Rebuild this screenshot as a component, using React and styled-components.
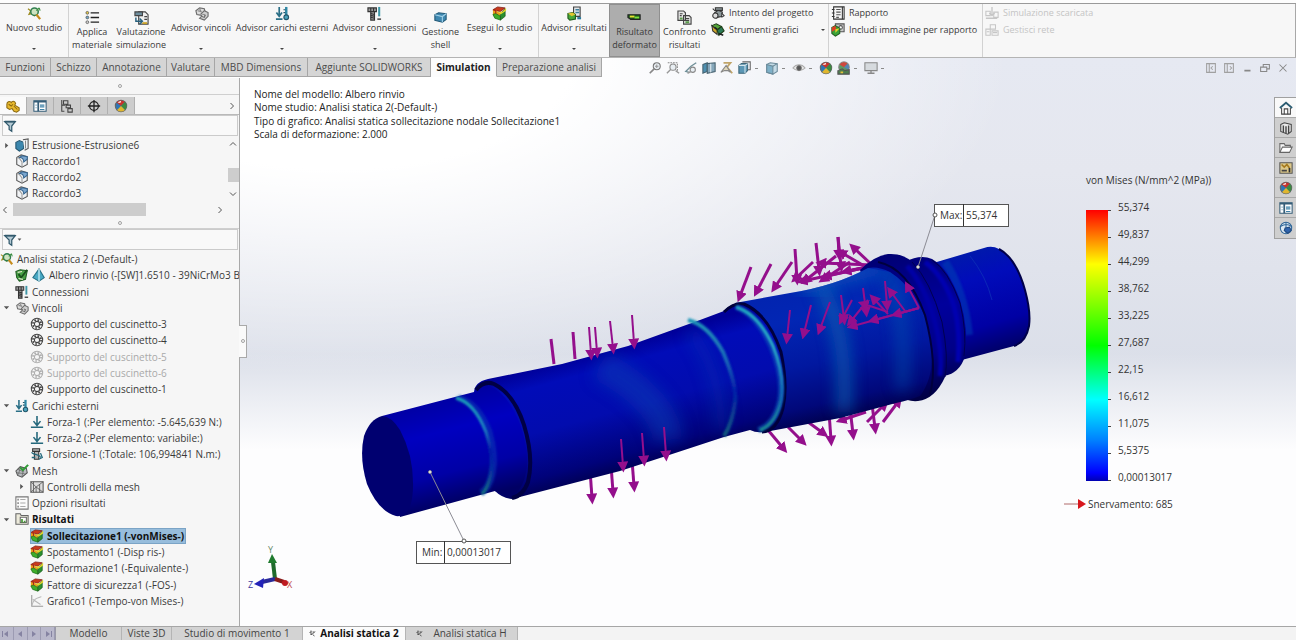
import styled, { createGlobalStyle } from "styled-components";

const GlobalStyle = createGlobalStyle`
  *,
  *::before,
  *::after {
    box-sizing: border-box;
  }

  body {
    margin: 0;
    font-family: "Open Sans", "Noto Sans", sans-serif;
    font-size: 10px;
    color: #3a3a3a;
    background: #f6f6f6;
  }

  button {
    padding: 0;
    border: 0;
    background: none;
    font: inherit;
    color: inherit;
    cursor: pointer;
  }

  ul {
    margin: 0;
    padding: 0;
    list-style: none;
  }
`;

/* ---------- layout ---------- */

const Page = styled.div`
  display: flex;
  flex-direction: column;
  min-height: 100vh;
`;

const TopEdge = styled.div`
  height: 4px;
  background: #fdfdfd;
  border-bottom: 1px solid #9a9a9a;
`;

const Ribbon = styled.header`
  display: flex;
  height: 54px;
  font-size: 9px;
  background: #f7f7f7;
  border-right: 1px solid #a8a8a8;
  border-bottom: 1px solid #b4b4b4;
`;

const Workspace = styled.div`
  flex: 1;
  display: flex;
  flex-direction: column;
  background:
    linear-gradient(to bottom, transparent 52%, #fdfdfe 69%),
    radial-gradient(ellipse 52% 56% at 26% 0%, #ffffff 35%, transparent 100%),
    linear-gradient(to bottom, #e6e9f2, #e5e7ef 20%, #dbdfe9 54%);
`;

const TabRow = styled.div`
  display: flex;
  height: 20px;
`;

const Body = styled.div`
  flex: 1;
  display: flex;
`;

/* ---------- ribbon ---------- */

const RibbonButton = styled.button`
  display: flex;
  flex-direction: column;
  align-items: center;
  flex-shrink: 0;
  width: ${(p) => p.$width}px;
  height: 53px;
  padding-top: ${(p) => (p.$tall ? 6 : 2)}px;
  line-height: 13px;
  white-space: nowrap;
  background: ${(p) => (p.$active ? "#adadad" : "transparent")};
  box-shadow: ${(p) => (p.$active ? "inset 0 0 0 1px #8f8f8f" : "none")};
`;

const RibbonLabel = styled.span`
  text-align: center;
`;

const Caret = styled.span`
  margin-top: auto;
  margin-bottom: 7px;
  border: 2px solid transparent;
  border-top-color: #444;
  border-bottom: 0;
`;

const Separator = styled.div`
  flex-shrink: 0;
  width: 1px;
  background: #d2d2d2;
`;

const SideGroup = styled.div`
  display: flex;
  flex-direction: column;
  flex-shrink: 0;
  width: ${(p) => p.$width}px;
  padding-left: 2px;
  color: ${(p) => (p.$disabled ? "#c4c4c4" : "inherit")};
`;

const SideButton = styled.button`
  display: flex;
  align-items: center;
  gap: 4px;
  height: 17px;
  white-space: nowrap;

  &:disabled {
    cursor: default;
  }
`;

const SideCaret = styled.span`
  margin-left: auto;
  margin-right: 3px;
  border: 2px solid transparent;
  border-top-color: #444;
  border-bottom: 0;
`;

/* ---------- command tabs ---------- */

const CommandTab = styled.button`
  flex-shrink: 0;
  width: ${(p) => p.$width}px;
  height: 19px;
  text-align: center;
  white-space: nowrap;
  color: ${(p) => (p.$active ? "#222" : "#4c4c4c")};
  font-weight: ${(p) => (p.$active ? 700 : 400)};
  background: ${(p) => (p.$active ? "#fcfcfc" : "#d5d5d5")};
  border-right: 1px solid #a6a6a6;
  border-bottom: 1px solid ${(p) => (p.$active ? "#fcfcfc" : "#a6a6a6")};
`;

const HeadsUp = styled.div`
  display: flex;
  align-items: center;
  gap: 4px;
  margin-left: 46px;
`;

const ToolButton = styled.button`
  display: flex;
  align-items: center;
  height: 14px;
`;

const Dot = styled.span`
  width: 3px;
  height: 1px;
  margin: 0 3px;
  background: #8a8a8a;
`;

const WindowControls = styled.div`
  display: flex;
  align-items: center;
  gap: 4px;
  margin-left: auto;
  padding-right: 6px;
`;

/* ---------- left panel ---------- */

const Panel = styled.aside`
  position: relative;
  display: flex;
  flex-direction: column;
  flex-shrink: 0;
  width: 240px;
  background: #f6f6f6;
  border-right: 1px solid #a9a9a9;
`;

const Splitter = styled.div`
  display: flex;
  align-items: center;
  justify-content: center;
  height: ${(p) => p.$height}px;
  border-bottom: 1px solid #cfcfcf;

  &::after {
    content: "";
    width: 4px;
    height: 4px;
    border: 1px solid #a2a2a2;
    border-radius: 50%;
  }
`;

const ManagerTabs = styled.div`
  display: flex;
  align-items: center;
  height: 20px;
  padding-top: 2px;
  border-bottom: 1px solid #b9b9b9;
`;

const ManagerTab = styled.button`
  display: flex;
  align-items: center;
  justify-content: center;
  width: 27px;
  height: 17px;
  background: ${(p) => (p.$active ? "#fafafa" : "#cdcdcd")};
  border-right: 1px solid #b0b0b0;
`;

const More = styled.button`
  display: flex;
  margin-left: auto;
  margin-right: 3px;
`;

const FilterBox = styled.label`
  display: flex;
  align-items: center;
  height: 21px;
  margin: 0 1px 0 2px;
  background: #f9f9f9;
  border: 1px solid #cbcbcb;
`;

const FilterInput = styled.input`
  flex: 1;
  min-width: 0;
  border: 0;
  outline: 0;
  background: transparent;
  font: inherit;
`;

const FeatureArea = styled.div`
  display: flex;
  height: 66px;
`;

const FeatureList = styled.ul`
  flex: 1;
  display: grid;
  grid-auto-rows: 16px;
  padding-top: 1px;
`;

const VScroll = styled.div`
  display: flex;
  flex-direction: column;
  align-items: center;
  justify-content: space-between;
  width: 12px;
  padding: 4px 0;
`;

const VThumb = styled.div`
  width: 11px;
  height: 14px;
  margin-top: 12px;
  background: #cdcdcd;
`;

const HScroll = styled.div`
  display: flex;
  align-items: center;
  gap: 4px;
  height: 15px;
  padding: 0 15px 0 1px;
`;

const HThumb = styled.div`
  width: 133px;
  height: 13px;
  margin-right: auto;
  background: #cdcdcd;
`;

const StudyTree = styled.ul`
  flex: 1;
  display: grid;
  grid-auto-rows: minmax(16px, 1fr);
  padding: 1px 0 17px;
  overflow: hidden;
`;

const TreeRow = styled.li`
  display: flex;
  align-items: center;
  min-width: 0;
  padding-left: ${(p) => p.$indent}px;
  white-space: nowrap;
  color: ${(p) => (p.$muted ? "#a9a9a9" : "inherit")};

  svg {
    flex-shrink: 0;
    opacity: ${(p) => (p.$muted ? 0.4 : 1)};
  }
`;

const Twisty = styled.span`
  display: flex;
  justify-content: center;
  flex-shrink: 0;
  width: 10px;
  margin-right: 4px;
`;

const TreeButton = styled.button`
  display: flex;
  align-items: center;
  gap: 3px;
  height: 16px;
  padding-right: 2px;
  white-space: nowrap;
  color: ${(p) => (p.$bold ? "#111" : "inherit")};
  font-weight: ${(p) => (p.$bold ? 700 : 400)};
  background: ${(p) => (p.$selected ? "#97bddc" : "transparent")};
  outline: ${(p) => (p.$selected ? "1px solid #7ba4c6" : "none")};
  outline-offset: -1px;
`;

const PanelHandle = styled.button`
  position: absolute;
  left: 239px;
  top: 45%;
  display: flex;
  align-items: center;
  justify-content: center;
  width: 8px;
  height: 33px;
  background: #fafafa;
  border: 1px solid #a9a9a9;
  border-left: 0;

  &::after {
    content: "";
    width: 4px;
    height: 4px;
    border: 1px solid #a2a2a2;
    border-radius: 50%;
  }
`;

/* ---------- graphics area ---------- */

const Canvas = styled.main`
  flex: 1;
  display: grid;
`;

const Scene = styled.svg`
  grid-area: 1 / 1;
  width: 100%;
  height: 100%;
`;

const Overlay = styled.div`
  grid-area: 1 / 1;
  display: flex;
  align-items: flex-start;
`;

const StudyInfo = styled.div`
  margin-right: auto;
  padding: 9px 0 0 14px;
  color: #222;

  p {
    margin: 0;
    line-height: 14px;
  }

  p:nth-child(even) {
    line-height: 13px;
  }
`;

const Legend = styled.section`
  width: 146px;
  margin-right: 64px;
  padding-top: 95px;
  color: #333;
`;

const LegendTitle = styled.div`
  padding-left: 22px;
  line-height: 14px;
  white-space: nowrap;
`;

const LegendScale = styled.div`
  display: flex;
  padding: 6px 0 0 22px;
`;

const ColourBar = styled.div`
  width: 22px;
  height: 271px;
  margin-top: 17px;
  background: linear-gradient(
    to bottom,
    #ff0000,
    #ff8000 10%,
    #ffff00 20%,
    #80ff00 35%,
    #00ff00 50%,
    #00ff80 60%,
    #00ffff 70%,
    #0080ff 85%,
    #0000ff 97%,
    #0000b0
  );
`;

const LegendValue = styled.li`
  display: flex;
  align-items: center;
  gap: 7px;
  height: 27px;

  &::before {
    content: "";
    width: 3px;
    height: 1px;
    margin-top: 7px;
    background: #444;
  }
`;

const YieldRow = styled.div`
  display: flex;
  align-items: center;
  gap: 2px;
  padding-top: 7px;
  line-height: 14px;
`;

const TaskPane = styled.nav`
  width: 22px;
  margin-top: 19px;
  border: 1px solid #a0a0a0;
  border-right: 0;
`;

const TaskButton = styled.button`
  display: flex;
  align-items: center;
  justify-content: center;
  width: 21px;
  height: 20px;
  background: ${(p) => (p.$active ? "#f9f9f9" : "#cfcfcf")};
  border-bottom: 1px solid #a9a9a9;

  &:last-child {
    border-bottom: 0;
  }
`;

/* ---------- bottom tabs ---------- */

const BottomBar = styled.footer`
  display: flex;
  height: 14px;
  background: #f3f3f3;
  border-top: 1px solid #a6a6a6;
`;

const Pager = styled.div`
  display: flex;
  width: 56px;
  background: #b9b8cb;
  border-right: 1px solid #9a9aa8;
`;

const PagerButton = styled.button`
  flex: 1;
  display: flex;
  align-items: center;
  justify-content: center;
  border-right: 1px solid #9c9bb2;
`;

const BottomTab = styled.button`
  display: flex;
  align-items: center;
  justify-content: center;
  gap: ${(p) => p.$gap || 3}px;
  width: ${(p) => p.$width}px;
  height: 13px;
  line-height: 13px;
  white-space: nowrap;
  color: ${(p) => (p.$active ? "#111" : "#444")};
  font-weight: ${(p) => (p.$active ? 700 : 400)};
  background: ${(p) => (p.$active ? "#fbfbfb" : "#d3d3d3")};
  border-right: 1px solid #b4b4b4;
`;

/* ---------- icons ---------- */

const IconSvg = styled.svg`
  flex-shrink: 0;
`;

const icons = {
  study: (
    <>
      <path d="M1 3l3 2-2 4 4-1 2 3" fill="#d8c93a" stroke="#9a8a20" />
      <circle cx="8" cy="6" r="4" fill="#cfe3c0" stroke="#2f7d4e" strokeWidth="1.6" />
      <path d="M10 9l4 5" stroke="#c58b1c" strokeWidth="2.4" />
      <path d="M10 5l3-3M13 2l1 3" stroke="#3a8f3f" />
    </>
  ),
  material: (
    <>
      <path d="M6 3h9M6 8h9M6 13h9" stroke="#222" strokeWidth="1.4" />
      <circle cx="2.5" cy="3" r="1.5" fill="#e3c64a" stroke="#555" strokeWidth="0.8" />
      <circle cx="2.5" cy="8" r="1.5" fill="#6fa7c7" stroke="#555" strokeWidth="0.8" />
      <circle cx="2.5" cy="13" r="1.5" fill="#ccc" stroke="#555" strokeWidth="0.8" />
    </>
  ),
  evaluate: (
    <>
      <path d="M5 2h7l3 3v10H5z" fill="#eee" />
      <path d="M1 2h8v4H1z" fill="#6f8f9f" />
      <path d="M2 8v4h6M6 9l3 3-3 3" stroke="#27607d" strokeWidth="1.5" />
      <path d="M9 14h5" stroke="#c9a227" strokeWidth="2" />
      <path d="M11 7h3M11 10h3" />
    </>
  ),
  fixture: (
    <>
      <path d="M2 5l4-3 5 1 1 4-4 3-5-1z" fill="#dcdcdc" stroke="#6c6c6c" />
      <path d="M7 9l4-4 4 2v4l-4 4-5-2 2-2 3 1 1-2-2-1" fill="#cfcfcf" stroke="#6c6c6c" />
      <path d="M4 5l4 1M6 3l2 4" stroke="#8a8a8a" />
    </>
  ),
  loads: (
    <>
      <path d="M4.500 1v10M1.500 7l3 4 3-4M1 14h7" stroke="#2a6f86" strokeWidth="1.8" />
      <path d="M12 1v9" stroke="#2f88a5" strokeWidth="2.6" />
      <circle cx="12" cy="12" r="2.5" fill="#4ba3bd" stroke="#22566a" />
      <path d="M9 4h2M9 7h2" stroke="#22566a" />
    </>
  ),
  connections: (
    <>
      <path d="M1 2h9v4H1zM4 6h4v9H4z" fill="#9b9b9b" stroke="#333" />
      <path d="M4 8l4 1M4 10l4 1M4 12l4 1M4 2v4M7 2v4" stroke="#333" />
      <path d="M13 1v10" stroke="#3f97a8" strokeWidth="2.2" />
      <path d="M11 14h4" stroke="#444" strokeWidth="1.6" />
    </>
  ),
  shell: (
    <>
      <path d="M2 5l4-2 8 1v6l-4 3-8-2z" fill="#3f88b0" stroke="#235a78" />
      <path d="M2 5l8 2 4-3M10 7v6" stroke="#9fd0e8" />
    </>
  ),
  plot: (
    <>
      <path d="M1 4l5-3 8 1-5 4z" fill="#c93a1c" stroke="#7a1a12" strokeWidth="0.8" />
      <path d="M1 4l4 1 4 3v3L4 9 1 10z" fill="#e9a21d" stroke="none" />
      <path d="M1 9l3-1 5 3v4l-6-2z" fill="#3fae2a" stroke="#1d6a1a" strokeWidth="0.8" />
      <path d="M9 8l5-5v8l-5 4z" fill="#2a8f2f" stroke="#1c5b1e" strokeWidth="0.8" />
      <path d="M7 6l4 0 4-4v3L9 9z" fill="#e5d22c" stroke="none" />
      <path d="M1 4l3 1v3" stroke="#a8281a" />
    </>
  ),
  advisorResults: (
    <>
      <path d="M7 1h7v10H7z" fill="#e2e6e8" />
      <path d="M9 4h4M9 7h4" stroke="#3f7f9c" strokeWidth="1.600" />
      <path d="M1 8l5-1 3 2v5l-6 1-2-2z" fill="#47a83b" stroke="#215e1c" />
      <path d="M1 8l5-1 3 2-4 2z" fill="#e0c630" stroke="none" />
      <path d="M11 13h4" stroke="#28789a" strokeWidth="2.4" />
    </>
  ),
  deformed: (
    <>
      <path d="M1 5h13v5H4L1 8z" fill="#1a5a1c" stroke="#222" />
      <path d="M3 6h5v2H3z" fill="#e8df2c" stroke="none" />
      <path d="M8 7h5v2H8z" fill="#7de03a" stroke="none" />
    </>
  ),
  compare: (
    <>
      <path d="M1 1h6l2 2v8H1zM7 6h6l2 2v7H7z" fill="#e6e6e6" />
      <path d="M3 4h3M3 6h2M9 9h4M9 11h4" />
      <path d="M3 8h3v2H3zM9 12h4v2H9z" fill="#5a9c4b" stroke="none" />
    </>
  ),
  intent: (
    <>
      <path d="M5 2h8v3H5zM4 8l4-3 5 2-1 5-5 1z" fill="#8f9a9c" stroke="#333" />
      <circle cx="5" cy="11" r="3" fill="#ddd" stroke="#333" />
      <path d="M12 8l3 3-3 2M2 3l3 3" stroke="#333" />
    </>
  ),
  plotTools: (
    <>
      <path d="M1 3l5-2 6 3-5 4z" fill="#54a53a" stroke="#1d3d16" />
      <path d="M1 3l6 5v5L2 9z" fill="#d0a82a" stroke="#333" />
      <path d="M7 8l5-4 3 5-6 5z" fill="#2b7a55" stroke="#1d3d16" />
      <path d="M4 5l3 2M9 12l5 2" stroke="#222" strokeWidth="1.800" />
    </>
  ),
  report: (
    <>
      <path d="M3 1h12v14H3z" fill="#f5f5f5" stroke="#333" />
      <path d="M1 4h3M1 8h3M1 12h3M13 1v14" stroke="#333" />
      <path d="M6 4h5M6 7h5M6 10h5M6 13h3" stroke="#555" />
    </>
  ),
  includeImage: (
    <>
      <path d="M5 1h10v9H5z" fill="#c9c9c9" stroke="#555" />
      <circle cx="11" cy="5" r="2" fill="#fff" stroke="#555" />
      <path d="M1 5l4-2 5 3v6l-5 3-4-3z" fill="#3aa336" stroke="#225d20" />
      <path d="M1 5l4-2 1 4-5 3z" fill="#df3e22" stroke="none" />
      <path d="M5 7l5-1-5 5z" fill="#efcf2c" stroke="none" />
    </>
  ),
  download: (
    <>
      <path d="M1 6h5v5H1zM10 7h5v6h-5z" stroke="#c6c6c6" />
      <path d="M8 1v9M5 8l3 3 3-3M1 14h13" stroke="#c6c6c6" strokeWidth="1.5" />
    </>
  ),
  network: (
    <>
      <path d="M1 7h5v7H1zM6 2h6v5H6zM8 9h7v5H8z" stroke="#c6c6c6" />
      <path d="M9 11h5M2 10h3" stroke="#c6c6c6" />
    </>
  ),
  part: (
    <>
      <path
        d="M1 6c0-3 3-4 5-2 1-2 4-2 5 1l-1 2 5 3v3l-3 2-3-1-2-3-3 1-3-2z"
        fill="#e8b92e"
        stroke="#8c6a12"
      />
      <path d="M3 6l3 2 2-2M9 8l4 4" stroke="#8c6a12" />
    </>
  ),
  properties: (
    <>
      <path d="M1 2h14v12H1z" fill="#fff" stroke="#355d78" />
      <path d="M1 3h14M6 3v11" stroke="#355d78" strokeWidth="2" />
      <path d="M8 7h5M8 9h5M8 12h5M3 7h1M3 10h1" stroke="#3d81a8" />
    </>
  ),
  config: (
    <>
      <path d="M2 1v13h3M2 7h4" stroke="#444" />
      <path d="M4 2h5v4H4zM7 7h5v3H7zM9 11h5v4H9z" fill="#ccc" />
    </>
  ),
  crosshair: (
    <>
      <circle cx="8" cy="8" r="5" stroke="#222" strokeWidth="1.5" />
      <path d="M8 1v14M1 8h14" stroke="#222" strokeWidth="1.5" />
    </>
  ),
  ball: (
    <>
      <circle cx="8" cy="8" r="6.5" fill="#2f76b5" stroke="#666" />
      <path d="M8 8L3 4A6.500 6.500 0 0 1 12.500 3.500z" fill="#c9322a" stroke="none" />
      <path d="M8 8l4.500-4.500a6.500 6.500 0 0 1 0 9z" fill="#3c8a3f" stroke="none" />
      <path d="M8 8l4.500 4.500a6.500 6.500 0 0 1-9 0z" fill="#e0b62e" stroke="none" />
      <path d="M5 4l3-1" stroke="#fff" strokeWidth="1.5" />
    </>
  ),
  funnel: (
    <>
      <path d="M2 3h12l-4 5v6l-3-2V8z" fill="#b4cad4" stroke="#31596c" strokeWidth="1.4" />
      <path d="M2 3h12" stroke="#31596c" strokeWidth="2" />
    </>
  ),
  extrude: (
    <>
      <path d="M1 5l4-2 5 2v7l-5 3-4-3z" fill="#3c87ae" stroke="#22546e" />
      <path d="M9 2l6-1v11l-4 2" fill="#eef2f5" stroke="#555" />
      <path d="M12 3v9" stroke="#888" />
    </>
  ),
  fillet: (
    <>
      <path d="M2 4l5-3 7 2v9l-6 3-6-3z" fill="#f1f3f5" stroke="#555" />
      <path d="M5 4c4 0 5 2 5 5l4-3V3L8 2z" fill="#7aa6cf" stroke="#36658f" />
      <path d="M2 4l3 1 3 4v5" stroke="#999" />
    </>
  ),
  body: (
    <>
      <path d="M1 4l5-2 8 1-2 10-7 2-3-4z" fill="#48a046" stroke="#1f5d22" />
      <path d="M4 7l3 4 7-9" stroke="#1a4f1c" strokeWidth="2" />
      <path d="M3 5l5-1M4 12l5 1" stroke="#e7ead0" />
    </>
  ),
  tetra: (
    <>
      <path d="M8 1l6 10-6 4-7-4z" fill="#49a9c4" stroke="#257087" />
      <path d="M8 1v14" stroke="#c7ebf4" strokeWidth="1.5" />
    </>
  ),
  bearing: (
    <>
      <circle cx="8" cy="8" r="6.5" />
      <circle cx="8" cy="8" r="3" />
      <circle cx="8" cy="8" r="4.7" strokeDasharray="1.8 1.9" strokeWidth="2" />
    </>
  ),
  force: <path d="M8 1v10M4 7l4 5 4-5M1 14h14" stroke="#24687c" strokeWidth="1.8" />,
  torque: (
    <>
      <path d="M3 2h8v3H3zM5 5h5v9H5z" fill="#b5b5b5" stroke="#333" />
      <path d="M2 6c0 3 9 2 10 6M12 7l2 5-4 2M2 12h4" stroke="#22687c" strokeWidth="1.5" />
    </>
  ),
  mesh: (
    <>
      <path d="M1 8l5-5 7 2 1 5-6 5-5-2z" fill="#b9bcbf" stroke="#555" />
      <path d="M3 6l7 3M6 4l-2 8M10 5l-2 9M2 10l9 1" stroke="#666" strokeWidth="0.8" />
      <path d="M6 4l3 3 6-6" stroke="#2f9a35" strokeWidth="2.4" />
    </>
  ),
  meshControl: (
    <>
      <path d="M1 2h14v12H1z" fill="#ddd" stroke="#555" />
      <path d="M1 2l6 6 8-6M7 8v6M7 8l8 6M1 14l6-6M4 2v12M11 5v9" stroke="#555" strokeWidth="0.9" />
    </>
  ),
  options: (
    <>
      <path d="M1 1h14v14H1z" fill="#fbfbfb" stroke="#777" />
      <path d="M6 4h6M6 8h6M6 12h6" stroke="#aaa" />
      <path d="M3 4h1M3 8h1M3 12h1" stroke="#333" strokeWidth="2" />
    </>
  ),
  results: (
    <>
      <path d="M1 2h5l1 2h8v10H1z" fill="#eceadb" stroke="#666" />
      <path d="M6 6h7v6H6z" fill="#fff" stroke="#666" />
      <path d="M7 12V8h2v4zM10 12v-2h2v2z" fill="#4b9a3a" stroke="none" />
    </>
  ),
  graph: (
    <>
      <path d="M2 1v13h13" stroke="#999" />
      <path d="M2 13C5 4 8 5 13 3M3 6l9 6" stroke="#b8b8b8" />
    </>
  ),
  zoom: (
    <>
      <circle cx="10" cy="6" r="4" fill="#e8eef3" stroke="#777" />
      <path d="M7 9l-5 5" stroke="#888" strokeWidth="2" />
      <path d="M8 6l4 0M10 4v4" stroke="#999" />
    </>
  ),
  zoomArea: (
    <>
      <path d="M2 2h11v9" stroke="#888" strokeDasharray="2 1" />
      <circle cx="8" cy="7" r="3.5" fill="#e8eef3" stroke="#888" />
      <path d="M5 10l-4 4M11 11l4 3" stroke="#999" strokeWidth="1.6" />
    </>
  ),
  previous: (
    <>
      <path d="M14 2L8 6l-6 6 4 1" stroke="#6f8f98" strokeWidth="1.5" />
      <circle cx="10" cy="10" r="3" fill="#e8eef3" stroke="#888" />
      <path d="M8 12l-4 2" stroke="#999" strokeWidth="1.600" />
    </>
  ),
  section: (
    <>
      <path d="M1 4l5-2v10l-5 2z" fill="#4e8fb0" stroke="#44606e" />
      <path d="M6 3l9-1v10l-9 2z" fill="#86a7bb" stroke="#44606e" />
      <path d="M10 3v10" stroke="#e4eef3" />
    </>
  ),
  dynamic: (
    <>
      <path d="M4 2h8l-4 5 6 7" stroke="#c0a468" strokeWidth="2" />
      <path d="M1 13l6-8 5 8-3-2-4 0z" fill="#e2d8b8" stroke="#888" />
    </>
  ),
  orientation: (
    <>
      <path d="M1 5l3-2h7v8l-3 3H1z" fill="#5c97b5" stroke="#3d6679" />
      <path d="M5 1h9v9h-3" stroke="#666" />
      <path d="M1 5h7l3-2M8 5v9" stroke="#d5e6ee" />
    </>
  ),
  displayStyle: (
    <>
      <path d="M2 4l4-2 8 1v9l-5 3-7-2z" fill="#c4dbe7" stroke="#6b8a9a" />
      <path d="M2 4l7 2v9l-7-2z" fill="#7eb0c8" stroke="#6b8a9a" />
      <path d="M9 6l5-3" stroke="#6b8a9a" />
    </>
  ),
  eye: (
    <>
      <path d="M1 8c4-5 10-5 14 0-4 4-10 4-14 0z" fill="#e7e7e7" stroke="#aaa" />
      <circle cx="8" cy="8" r="2.5" fill="#555" stroke="#666" />
    </>
  ),
  scene: (
    <>
      <circle cx="8" cy="7" r="6" fill="#5d9a63" stroke="#888" />
      <path d="M8 7L3 4a6 6 0 0 1 9-1z" fill="#cf473e" stroke="none" />
      <path d="M8 7l4-4a6 6 0 0 1 1 7z" fill="#5684b5" stroke="none" />
      <path d="M1 11l5-2 3 2 5-1v5H1z" fill="#4f7d4f" stroke="#555" />
      <path d="M4 13h3" stroke="#e2c13a" strokeWidth="2" />
    </>
  ),
  monitor: (
    <>
      <path d="M1 2h14v9H1z" fill="#d6dade" stroke="#888" />
      <path d="M8 11v3M4 14h8" stroke="#888" strokeWidth="1.5" />
    </>
  ),
  paneLeft: <path d="M3 3h10v10H3zM6 3v10M10 6L8 8l2 2" stroke="#a0a0a0" />,
  paneRight: <path d="M3 3h10v10H3zM6 3v10M9 6l2 2-2 2" stroke="#a0a0a0" />,
  minimise: <path d="M5 11h7" stroke="#888" strokeWidth="2" />,
  restore: <path d="M3 7h7v5H3zM6 7V4h7v5h-3" stroke="#888" />,
  close: <path d="M4 4l8 8M12 4l-8 8" stroke="#888" />,
  home: (
    <>
      <path d="M3 8v7h10V8" fill="#fff" />
      <path d="M1 8l7-6 7 6" stroke="#2b5c72" strokeWidth="2" />
      <path d="M6 15V9h4v6" />
    </>
  ),
  library: (
    <>
      <path d="M2 4l4-2 8 2v8l-4 3-8-3z" fill="#e9e9e9" />
      <path d="M5 5v8M8 6v8M11 5v9" strokeWidth="1.6" />
    </>
  ),
  folder: (
    <>
      <path d="M1 13V3h5l1 2h6v2" fill="#f4f4f4" stroke="#666" />
      <path d="M1 13L4 7h11l-3 6z" fill="#fff" stroke="#666" />
    </>
  ),
  gallery: (
    <>
      <path d="M1 2h14v12H1z" fill="#dcc88a" stroke="#555" />
      <path d="M3 4l3 3 3-3 3 4" stroke="#a5791c" strokeWidth="1.800" />
      <path d="M3 11h6" strokeWidth="2" />
      <path d="M12 8v5" stroke="#333" strokeWidth="2" />
    </>
  ),
  globe: (
    <>
      <circle cx="8" cy="8" r="6.5" fill="#dce9f3" stroke="#2f6698" />
      <path d="M2 6c5-3 8-3 12 0M8 1v13" stroke="#2f6698" />
      <path d="M7 8l5-1 2 4-4 3-4-3z" fill="#2f64ad" stroke="#234b80" />
    </>
  ),
  cursor: <path d="M4 1v9l2-3M4 3L1 6M7 8l5-5M7 4h4M7 9l4 3" stroke="#333" strokeWidth="1.6" />,
  right: <path d="M5 2l6 6-6 6" stroke="#555" strokeWidth="2" />,
  left: <path d="M11 2L5 8l6 6" stroke="#555" strokeWidth="2" />,
  up: <path d="M2 11l6-6 6 6" stroke="#555" strokeWidth="2" />,
  down: <path d="M2 5l6 6 6-6" stroke="#555" strokeWidth="2" />,
  open: <path d="M2 5h12l-6 7z" fill="#555" stroke="none" />,
  closed: <path d="M5 2v12l7-6z" fill="#555" stroke="none" />,
};

const Icon = ({ name, size = 14 }) => (
  <IconSvg
    width={size}
    height={size}
    viewBox="0 0 16 16"
    fill="none"
    stroke="#444"
    strokeWidth="1.2"
    aria-hidden="true"
  >
    {icons[name]}
  </IconSvg>
);

/* ---------- data ---------- */

const commandTabs = [
  ["Funzioni", 51],
  ["Schizzo", 46],
  ["Annotazione", 70],
  ["Valutare", 48],
  ["MBD Dimensions", 93],
  ["Aggiunte SOLIDWORKS", 123],
  ["Simulation", 66],
  ["Preparazione analisi", 105],
];

const headsUpTools = [
  ["zoom", "Zoom adatta"],
  ["zoomArea", "Zoom area"],
  ["previous", "Vista precedente"],
  ["section", "Vista in sezione"],
  ["dynamic", "Viste annotazione"],
  ["orientation", "Orientamento", true],
  ["displayStyle", "Stile di visualizzazione", true],
  ["eye", "Nascondi/mostra", true],
  ["ball", "Modifica aspetto"],
  ["scene", "Applica scena", true],
  ["monitor", "Impostazioni", true],
];

const windowTools = [
  ["paneLeft", "Riquadro sinistro"],
  ["paneRight", "Riquadro destro"],
  ["minimise", "Riduci"],
  ["restore", "Ripristina"],
  ["close", "Chiudi"],
];

const taskTools = [
  ["home", "Risorse"],
  ["library", "Libreria"],
  ["folder", "File"],
  ["gallery", "Tavolozza"],
  ["ball", "Aspetti"],
  ["properties", "Proprietà"],
  ["globe", "Forum"],
];

const features = [
  ["Estrusione-Estrusione6", "extrude", "closed"],
  ["Raccordo1", "fillet"],
  ["Raccordo2", "fillet"],
  ["Raccordo3", "fillet"],
];

const studyRows = [
  { label: "Connessioni", icon: "connections", depth: 1 },
  { label: "Vincoli", icon: "fixture", depth: 1, twisty: "open" },
  { label: "Supporto del cuscinetto-3", icon: "bearing", depth: 2 },
  { label: "Supporto del cuscinetto-4", icon: "bearing", depth: 2 },
  { label: "Supporto del cuscinetto-5", icon: "bearing", depth: 2, muted: true },
  { label: "Supporto del cuscinetto-6", icon: "bearing", depth: 2, muted: true },
  { label: "Supporto del cuscinetto-1", icon: "bearing", depth: 2 },
  { label: "Carichi esterni", icon: "loads", depth: 1, twisty: "open" },
  { label: "Forza-1 (:Per elemento: -5.645,639 N:)", icon: "force", depth: 2 },
  { label: "Forza-2 (:Per elemento: variabile:)", icon: "force", depth: 2 },
  { label: "Torsione-1 (:Totale: 106,994841 N.m:)", icon: "torque", depth: 2 },
  { label: "Mesh", icon: "mesh", depth: 1, twisty: "open" },
  { label: "Controlli della mesh", icon: "meshControl", depth: 2, twisty: "closed" },
  { label: "Opzioni risultati", icon: "options", depth: 1 },
  { label: "Risultati", icon: "results", depth: 1, twisty: "open", bold: true },
  { label: "Sollecitazione1 (-vonMises-)", icon: "plot", depth: 2, bold: true, selected: true },
  { label: "Spostamento1 (-Disp ris-)", icon: "plot", depth: 2 },
  { label: "Deformazione1 (-Equivalente-)", icon: "plot", depth: 2 },
  { label: "Fattore di sicurezza1 (-FOS-)", icon: "plot", depth: 2 },
  { label: "Grafico1 (-Tempo-von Mises-)", icon: "graph", depth: 2 },
];

const legendValues = [
  "55,374",
  "49,837",
  "44,299",
  "38,762",
  "33,225",
  "27,687",
  "22,15",
  "16,612",
  "11,075",
  "5,5375",
  "0,00013017",
];

// load arrows drawn behind the shaft: x1, y1, x2, y2
const backArrows = [
  [751, 267, 740, 296],
  [771, 264, 757, 291],
  [792, 262, 775, 287],
  [795, 249, 797, 279],
  [816, 243, 819, 270],
  [838, 237, 839, 254],
  [838, 237, 841, 266],
  [813, 262, 796, 278],
  [836, 256, 806, 280],
  [850, 262, 824, 279],
  [872, 265, 854, 248],
  [872, 265, 822, 263],
  [866, 267, 842, 253],
  [872, 266, 847, 271],
  [872, 266, 827, 276],
  [872, 266, 803, 281],
  [590, 470, 592, 498],
  [611, 465, 613, 492],
  [632, 460, 634, 486],
  [768, 430, 783, 448],
  [788, 427, 802, 441],
  [808, 422, 823, 433],
  [829, 412, 831, 440],
  [850, 408, 853, 434],
  [872, 404, 875, 428],
  [866, 412, 842, 420],
  [883, 422, 898, 402],
  [867, 422, 884, 405],
];

const frontArrows = [
  [589, 327, 591, 354],
  [595, 327, 597, 352],
  [610, 321, 613, 348],
  [632, 315, 634, 343],
  [621, 439, 623, 466],
  [642, 433, 644, 460],
  [664, 427, 666, 455],
  [790, 310, 787, 338],
  [811, 305, 804, 333],
  [830, 302, 820, 329],
  [841, 295, 844, 319],
  [852, 300, 842, 319],
  [863, 288, 866, 311],
  [885, 281, 887, 305],
  [905, 311, 891, 292],
  [919, 308, 908, 287],
  [888, 314, 874, 299],
  [868, 300, 851, 321],
  [919, 308, 897, 314],
  [919, 308, 874, 320],
  [919, 308, 853, 326],
  [888, 312, 864, 304],
];

/* ---------- model ---------- */

const Arrow = ({ points: [x1, y1, x2, y2] }) => (
  <line x1={x1} y1={y1} x2={x2} y2={y2} markerEnd="url(#head)" />
);

const Model = () => (
  <Scene viewBox="240 78 1056 548" role="img" aria-label="Albero rinvio">
    <defs>
      <linearGradient id="steel" gradientUnits="userSpaceOnUse" x1="600" y1="350" x2="633" y2="472">
        <stop offset="0" stopColor="#000098" />
        <stop offset="0.15" stopColor="#010cb8" />
        <stop offset="0.5" stopColor="#020cae" />
        <stop offset="0.85" stopColor="#00027a" />
        <stop offset="1" stopColor="#00004e" />
      </linearGradient>
      <linearGradient id="steelSmall" gradientUnits="userSpaceOnUse" x1="440" y1="400" x2="466" y2="500">
        <stop offset="0" stopColor="#0000a4" />
        <stop offset="0.3" stopColor="#0000c0" />
        <stop offset="0.7" stopColor="#0000a6" />
        <stop offset="1" stopColor="#000064" />
      </linearGradient>
      <linearGradient id="steelWide" gradientUnits="userSpaceOnUse" x1="820" y1="286" x2="850" y2="418">
        <stop offset="0" stopColor="#0224b0" />
        <stop offset="0.2" stopColor="#0226b4" />
        <stop offset="0.55" stopColor="#0118a0" />
        <stop offset="0.85" stopColor="#01087a" />
        <stop offset="1" stopColor="#00004c" />
      </linearGradient>
      <linearGradient id="tip" gradientUnits="userSpaceOnUse" x1="964" y1="254" x2="994" y2="356">
        <stop offset="0" stopColor="#0018ac" />
        <stop offset="0.25" stopColor="#010cba" />
        <stop offset="0.7" stopColor="#0000a4" />
        <stop offset="1" stopColor="#000060" />
      </linearGradient>
      <linearGradient id="collar" gradientUnits="userSpaceOnUse" x1="895" y1="254" x2="930" y2="400">
        <stop offset="0" stopColor="#000074" />
        <stop offset="0.4" stopColor="#00009c" />
        <stop offset="0.7" stopColor="#000088" />
        <stop offset="1" stopColor="#00003e" />
      </linearGradient>
      <linearGradient id="ring" gradientUnits="userSpaceOnUse" x1="0" y1="300" x2="0" y2="435">
        <stop offset="0" stopColor="#22b0c0" />
        <stop offset="0.35" stopColor="#2bb0c8" />
        <stop offset="0.7" stopColor="#1470b8" />
        <stop offset="1" stopColor="#1e9a8c" />
      </linearGradient>
      <linearGradient id="ringFade" gradientUnits="userSpaceOnUse" x1="0" y1="318" x2="0" y2="440">
        <stop offset="0" stopColor="#2098b8" />
        <stop offset="0.35" stopColor="#1868b8" />
        <stop offset="0.6" stopColor="#0420a8" />
        <stop offset="1" stopColor="#106078" />
      </linearGradient>
      <linearGradient id="ringLeft" gradientUnits="userSpaceOnUse" x1="0" y1="395" x2="0" y2="495">
        <stop offset="0" stopColor="#1cb0b8" />
        <stop offset="0.35" stopColor="#1c80c0" />
        <stop offset="0.55" stopColor="#0418a8" />
        <stop offset="0.75" stopColor="#0630a0" />
        <stop offset="1" stopColor="#148078" />
      </linearGradient>
      <filter id="soft" x="-50%" y="-20%" width="200%" height="140%">
        <feGaussianBlur stdDeviation="1" />
      </filter>
      <filter id="glow" x="-100%" y="-30%" width="300%" height="160%">
        <feGaussianBlur stdDeviation="8" />
      </filter>
      <marker
        id="head"
        viewBox="0 0 10 10"
        refX="4"
        refY="5"
        markerWidth="11"
        markerHeight="11"
        markerUnits="userSpaceOnUse"
        orient="auto"
      >
        <path d="M0 0l10 5-10 5z" fill="#940f8c" />
      </marker>
      <clipPath id="wideClip">
        <path d="M738 303L790 293Q835 286 868 268L890 272Q918 290 929 330Q936 372 920 396L840 418L784 430Q788 350 738 303Z" />
      </clipPath>
      <clipPath id="mainClip">
        <path d="M490 380L562 364L628 346L700 320L724 311L784 400L750 430L724 437L660 458L620 471L530 494Z" />
      </clipPath>
    </defs>

    <g stroke="#940f8c" strokeWidth="3">
      {backArrows.map((points) => (
        <Arrow key={points.join()} points={points} />
      ))}
    </g>

    {/* right end of the shaft */}
    <path
      d="M930 264L984 248Q992 245 999 249Q1016 258 1025 290Q1031 312 1029 326Q1026 342 1014 346L958 361Z"
      fill="url(#tip)"
    />
    <path d="M945 262Q964 290 969 335" stroke="#0644b4" strokeWidth="8" fill="none" filter="url(#soft)" opacity="0.5" />
    <path d="M970 256Q986 276 992 300" stroke="#1034b8" strokeWidth="1" fill="none" opacity="0.7" />
    <path d="M999 249Q1016 258 1025 290Q1031 312 1029 326Q1026 342 1014 346" stroke="#00004a" strokeWidth="2" fill="none" />
    <path
      d="M905 262Q920 254 932 259Q948 268 960 300Q969 330 965 356Q960 373 944 376Z"
      fill="url(#collar)"
    />
    <path d="M932 260Q948 270 960 303Q967 332 964 356" stroke="#000050" strokeWidth="1" fill="none" />
    <path d="M925 262Q944 276 954 306Q961 332 958 362" stroke="#0000b0" strokeWidth="5" fill="none" filter="url(#soft)" />
    <path
      d="M860 270Q874 256 888 254Q903 253 912 262Q930 280 942 322Q950 358 945 377Q935 399 918 401Q908 402 898 396Z"
      fill="url(#collar)"
    />
    <path d="M907 266Q924 284 935 322Q943 352 940 376" stroke="#0000a6" strokeWidth="5" fill="none" filter="url(#soft)" />
    <path d="M912 262Q930 280 942 322Q949 358 945 377" stroke="#000050" strokeWidth="1" fill="none" />

    {/* wide seat */}
    <path
      d="M735 303L790 293Q835 286 868 268Q878 266 890 272Q918 290 929 330Q938 372 920 396Q910 400 896 403L840 418L765 432Z"
      fill="url(#steelWide)"
    />
    <g clipPath="url(#wideClip)">
      <path d="M820 285Q848 330 844 412" stroke="#0a62b0" strokeWidth="14" fill="none" filter="url(#glow)" opacity="0.8" />
      <path d="M884 265Q908 310 902 390" stroke="#0a58b0" strokeWidth="10" fill="none" filter="url(#glow)" opacity="0.7" />
      <path d="M800 290L880 268" stroke="#0a60c0" strokeWidth="14" fill="none" filter="url(#glow)" opacity="0.7" />
    </g>
    <path d="M878 262Q908 268 925 315Q938 365 930 394" stroke="#00003e" strokeWidth="2" fill="none" />

    {/* main body */}
    <path
      d="M474 393Q474 382 488 379L562 364L628 346L700 320L724 311Q732 302 742 303Q766 312 779 350Q788 384 783 408Q777 430 764 432Q756 433 750 430L724 437L660 458L620 471L512 499Q502 498 495 491Z"
      fill="url(#steel)"
    />
    <g clipPath="url(#mainClip)">
      <path d="M600 365Q664 400 668 440" stroke="#0a3cb4" strokeWidth="30" fill="none" filter="url(#glow)" opacity="0.55" />
      <path d="M690 330Q720 370 722 430" stroke="#0a3cb4" strokeWidth="12" fill="none" filter="url(#glow)" opacity="0.4" />
    </g>
    <path d="M724 312Q734 302 744 304Q768 314 781 352Q788 386 783 408Q777 431 762 432" stroke="#00003c" strokeWidth="3" fill="none" />
    <path d="M736 307Q756 314 771 346Q784 376 780 400Q775 424 758 430" stroke="#0a50b8" strokeWidth="6" fill="none" filter="url(#soft)" opacity="0.6" />
    <path d="M736 307Q758 314 773 346Q785 376 781 400Q776 424 760 430" stroke="url(#ring)" strokeWidth="3" fill="none" filter="url(#soft)" />
    <path d="M688 320Q708 325 723 352Q737 385 735 402Q732 424 724 436" stroke="url(#ringFade)" strokeWidth="4" fill="none" filter="url(#soft)" />

    {/* left journal */}
    <path
      d="M382 416L474 392Q480 384 490 386Q508 394 520 424Q532 458 524 480Q519 495 508 496Q500 494 495 491L400 517Z"
      fill="url(#steelSmall)"
    />
    <path d="M476 390Q484 380 494 384Q514 394 524 425Q534 458 528 482Q523 496 512 498" stroke="#000044" strokeWidth="4" fill="none" />
    <path d="M458 398Q478 403 489 432Q496 456 492 474Q489 488 481 493" stroke="#0a40b4" strokeWidth="7" fill="none" filter="url(#soft)" opacity="0.5" />
    <path d="M456 398Q474 402 486 432Q494 456 491 474Q488 488 482 494" stroke="url(#ringLeft)" strokeWidth="3" fill="none" filter="url(#soft)" />
    <path
      d="M382 416Q370 419 364 436Q359 458 367 484Q378 511 396 516Q412 518 413 488Q414 456 400 430Q391 416 382 416Z"
      fill="#000070"
    />

    <g stroke="#940f8c" strokeWidth="3">
      <line x1="551" y1="339" x2="554" y2="364" />
      <line x1="573" y1="332" x2="575" y2="359" />
    </g>
    <g stroke="#940f8c" strokeWidth="2">
      {frontArrows.map((points) => (
        <Arrow key={points.join()} points={points} />
      ))}
    </g>

    {/* probes */}
    <g stroke="#8b8b94" fill="#fff">
      <line x1="430" y1="472" x2="464" y2="541" />
      <line x1="935" y1="215" x2="918" y2="267" />
      <circle cx="430" cy="472" r="1.5" />
      <circle cx="918" cy="267" r="1.5" />
    </g>
    <g fill="#fff" stroke="#555">
      <rect x="416.5" y="541.5" width="94" height="22" />
      <rect x="934.5" y="204.5" width="74" height="22" />
      <path d="M444.5 541v22M963.5 204v22" stroke="#333" />
      <circle cx="464" cy="541" r="2" />
      <circle cx="935" cy="215" r="2" />
    </g>
    <g fontSize="10" fill="#333">
      <text x="422" y="556">Min:</text>
      <text x="447" y="556">0,00013017</text>
      <text x="940" y="219">Max:</text>
      <text x="966" y="219">55,374</text>
    </g>

    {/* axis triad */}
    <path d="M275 579L273 562" stroke="#1f6a2c" strokeWidth="4" />
    <path d="M268 563l4-9 5 9z" fill="#1f7a2e" />
    <path d="M275 579L262 582" stroke="#2a2a9a" strokeWidth="4" />
    <path d="M264 578l-10 6 9 4z" fill="#2222b8" />
    <path d="M275 579L284 582" stroke="#8a1a1a" strokeWidth="4" />
    <circle cx="285" cy="583" r="3" fill="#c01a20" />
    <g fontSize="9">
      <text x="268" y="553" fill="#6a8a6a">Y</text>
      <text x="248" y="588" fill="#3a3aa0">Z</text>
      <text x="287" y="588" fill="#c04a4a">X</text>
    </g>
  </Scene>
);

/* ---------- parts ---------- */

const Command = ({ icon, lines, width, menu, active }) => (
  <RibbonButton $width={width} $tall={lines.length > 1} $active={active}>
    <Icon name={icon} size={15} />
    {lines.map((line) => (
      <RibbonLabel key={line}>{line}</RibbonLabel>
    ))}
    {menu && <Caret />}
  </RibbonButton>
);

const SideCommand = ({ icon, label, menu, disabled }) => (
  <SideButton disabled={disabled}>
    <Icon name={icon} />
    {label}
    {menu && <SideCaret />}
  </SideButton>
);

const StudyRow = ({ label, icon, depth, twisty, muted, bold, selected }) => (
  <TreeRow $indent={depth === 2 ? 16 : 1} $muted={muted}>
    <Twisty>{twisty && <Icon name={twisty} size={7} />}</Twisty>
    <TreeButton $bold={bold} $selected={selected}>
      <Icon name={icon} />
      {label}
    </TreeButton>
  </TreeRow>
);

export default function App() {
  return (
    <Page>
      <GlobalStyle />
      <TopEdge />
      <Ribbon>
        <Command icon="study" lines={["Nuovo studio"]} width={68} menu />
        <Separator />
        <Command icon="material" lines={["Applica", "materiale"]} width={46} />
        <Command icon="evaluate" lines={["Valutazione", "simulazione"]} width={52} />
        <Command icon="fixture" lines={["Advisor vincoli"]} width={68} menu />
        <Command icon="loads" lines={["Advisor carichi esterni"]} width={94} menu />
        <Command icon="connections" lines={["Advisor connessioni"]} width={91} menu />
        <Command icon="shell" lines={["Gestione", "shell"]} width={41} />
        <Command icon="plot" lines={["Esegui lo studio"]} width={77} menu />
        <Separator />
        <Command icon="advisorResults" lines={["Advisor risultati"]} width={70} menu />
        <Command icon="deformed" lines={["Risultato", "deformato"]} width={51} active />
        <Command icon="compare" lines={["Confronto", "risultati"]} width={49} />
        <SideGroup $width={119}>
          <SideCommand icon="intent" label="Intento del progetto" />
          <SideCommand icon="plotTools" label="Strumenti grafici" menu />
        </SideGroup>
        <Separator />
        <SideGroup $width={153}>
          <SideCommand icon="report" label="Rapporto" />
          <SideCommand icon="includeImage" label="Includi immagine per rapporto" />
        </SideGroup>
        <Separator />
        <SideGroup $width={160} $disabled>
          <SideCommand icon="download" label="Simulazione scaricata" disabled />
          <SideCommand icon="network" label="Gestisci rete" disabled />
        </SideGroup>
      </Ribbon>

      <Workspace>
        <TabRow>
          {commandTabs.map(([label, width]) => (
            <CommandTab key={label} $width={width} $active={label === "Simulation"}>
              {label}
            </CommandTab>
          ))}
          <HeadsUp>
            {headsUpTools.map(([icon, label, menu]) => (
              <ToolButton key={icon} aria-label={label}>
                <Icon name={icon} />
                {menu && <Dot />}
              </ToolButton>
            ))}
          </HeadsUp>
          <WindowControls>
            {windowTools.map(([icon, label]) => (
              <ToolButton key={icon} aria-label={label}>
                <Icon name={icon} />
              </ToolButton>
            ))}
          </WindowControls>
        </TabRow>

        <Body>
          <Panel>
            <Splitter $height={17} />
            <ManagerTabs>
              {["part", "properties", "config", "crosshair", "ball"].map((icon) => (
                <ManagerTab key={icon} $active={icon === "part"} aria-label={icon}>
                  <Icon name={icon} />
                </ManagerTab>
              ))}
              <More aria-label="Altro">
                <Icon name="right" size={8} />
              </More>
            </ManagerTabs>
            <FilterBox>
              <Icon name="funnel" />
              <FilterInput aria-label="Filtro funzioni" />
            </FilterBox>
            <FeatureArea>
              <FeatureList>
                {features.map(([label, icon, twisty]) => (
                  <TreeRow key={label} $indent={1}>
                    <Twisty>{twisty && <Icon name={twisty} size={7} />}</Twisty>
                    <TreeButton>
                      <Icon name={icon} />
                      {label}
                    </TreeButton>
                  </TreeRow>
                ))}
              </FeatureList>
              <VScroll>
                <Icon name="up" size={8} />
                <VThumb />
                <Icon name="down" size={8} />
              </VScroll>
            </FeatureArea>
            <HScroll>
              <Icon name="left" size={8} />
              <HThumb />
              <Icon name="right" size={8} />
            </HScroll>
            <Splitter $height={12} />
            <FilterBox>
              <Icon name="funnel" />
              <Icon name="open" size={5} />
              <FilterInput aria-label="Filtro studio" />
            </FilterBox>
            <StudyTree>
              <TreeRow $indent={0}>
                <TreeButton>
                  <Icon name="study" />
                  Analisi statica 2 (-Default-)
                </TreeButton>
              </TreeRow>
              <TreeRow $indent={15}>
                <TreeButton>
                  <Icon name="body" />
                  <Icon name="tetra" />
                  Albero rinvio (-[SW]1.6510 - 39NiCrMo3 Bo
                </TreeButton>
              </TreeRow>
              {studyRows.map((row) => (
                <StudyRow key={row.label} {...row} />
              ))}
            </StudyTree>
            <PanelHandle aria-label="Comprimi pannello" />
          </Panel>

          <Canvas>
            <Model />
            <Overlay>
              <StudyInfo>
                <p>Nome del modello: Albero rinvio</p>
                <p>Nome studio: Analisi statica 2(-Default-)</p>
                <p>Tipo di grafico: Analisi statica sollecitazione nodale Sollecitazione1</p>
                <p>Scala di deformazione: 2.000</p>
              </StudyInfo>
              <Legend>
                <LegendTitle>von Mises (N/mm^2 (MPa))</LegendTitle>
                <LegendScale>
                  <ColourBar />
                  <ul>
                    {legendValues.map((value) => (
                      <LegendValue key={value}>{value}</LegendValue>
                    ))}
                  </ul>
                </LegendScale>
                <YieldRow>
                  <svg width="22" height="12" viewBox="0 0 22 12" aria-hidden="true">
                    <path d="M0 6h14" stroke="#b06a6a" />
                    <path d="M14 1l8 5-8 5z" fill="#d8161c" />
                  </svg>
                  Snervamento: 685
                </YieldRow>
              </Legend>
              <TaskPane>
                {taskTools.map(([icon, label]) => (
                  <TaskButton key={icon} $active={icon === "home"} aria-label={label}>
                    <Icon name={icon} />
                  </TaskButton>
                ))}
              </TaskPane>
            </Overlay>
          </Canvas>
        </Body>
      </Workspace>

      <BottomBar>
        <Pager>
          {["Primo", "Precedente", "Successivo", "Ultimo"].map((label, i) => (
            <PagerButton key={label} aria-label={label}>
              <svg width="8" height="8" viewBox="0 0 8 8" fill="#8583a2" aria-hidden="true">
                {i < 2 ? <path d="M6 1v6L2 4z" /> : <path d="M2 1v6l4-3z" />}
                {i === 0 && <path d="M0 1h1v6H0z" />}
                {i === 3 && <path d="M7 1h1v6H7z" />}
              </svg>
            </PagerButton>
          ))}
        </Pager>
        <BottomTab $width={66}>Modello</BottomTab>
        <BottomTab $width={50}>Viste 3D</BottomTab>
        <BottomTab $width={131}>Studio di movimento 1</BottomTab>
        <BottomTab $width={103} $active>
          <Icon name="cursor" size={8} />
          Analisi statica 2
        </BottomTab>
        <BottomTab $width={112} $gap={9}>
          <Icon name="cursor" size={8} />
          Analisi statica H
        </BottomTab>
      </BottomBar>
    </Page>
  );
}
